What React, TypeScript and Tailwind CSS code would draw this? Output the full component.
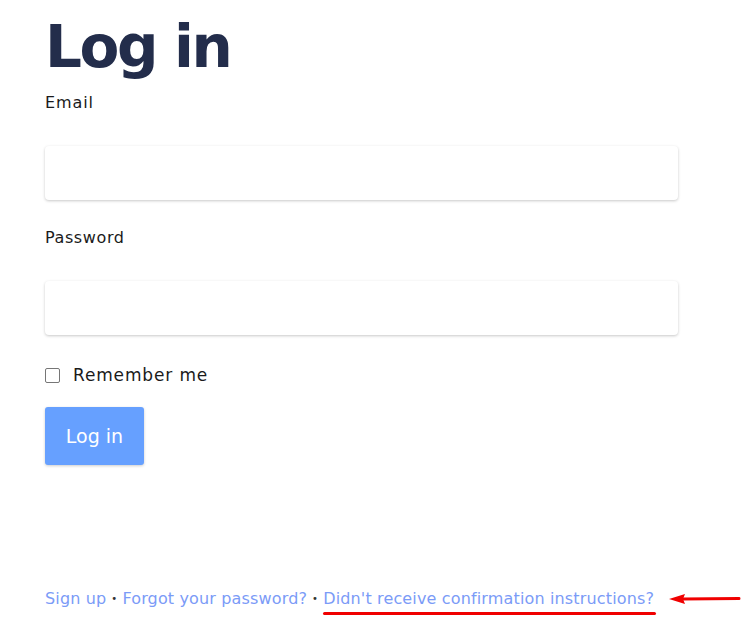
import React from "react";

export default function App() {
  const font = { fontFamily: '"DejaVu Sans", "Open Sans", sans-serif' };
  return (
    <div className="relative h-[643px] w-[755px] bg-white pl-[45px]" style={font}>
      <h1 className="pt-[9px] text-[58px] font-bold leading-[76px] tracking-[-2.4px] text-[#232d4b]">Log in</h1>
      <label className="mt-[8px] block text-[16px] leading-[20px] tracking-[0.9px] text-[#1a1a1a]">Email</label>
      <div className="mt-[33px] h-[54px] w-[633px] rounded-[4px] bg-white shadow-[0_1px_3px_rgba(0,0,0,0.22)]" />
      <label className="mt-[28px] block text-[16px] leading-[20px] tracking-[0.6px] text-[#1a1a1a]">Password</label>
      <div className="mt-[33px] h-[54px] w-[633px] rounded-[4px] bg-white shadow-[0_1px_3px_rgba(0,0,0,0.22)]" />
      <div className="mt-[30px] flex items-center">
        <span className="h-[15px] w-[15px] rounded-[2px] border border-[#767676] bg-white" />
        <span className="ml-[13px] text-[17px] leading-[20px] tracking-[0.85px] text-[#1a1a1a]">Remember me</span>
      </div>
      <button className="mt-[22px] flex h-[58px] w-[99px] items-center justify-center rounded-[3px] bg-[#66a0ff] text-[19px] text-white shadow-[0_1px_3px_rgba(0,0,0,0.2)]">
        Log in
      </button>
      <div className="mt-[124px] flex items-center text-[16px] leading-[20px] tracking-[0.15px] text-[#7b9bf7]">
        <span>Sign up</span>
        <span className="mx-[5px] text-[10px] text-[#333]">•</span>
        <span>Forgot your password?</span>
        <span className="mx-[5px] text-[10px] text-[#333]">•</span>
        <span className="relative">
          Didn't receive confirmation instructions?
          <span className="absolute -bottom-[6px] -right-[2px] left-0 h-[3px] rounded-full bg-[#f00000]" />
        </span>
        <svg className="ml-[15px]" width="72" height="14" viewBox="0 0 72 14">
          <path d="M14 7 L70 6.5" stroke="#f00000" strokeWidth="3" strokeLinecap="round" />
          <path d="M0 7 L16 2 L14 7 L16 12 Z" fill="#f00000" />
        </svg>
      </div>
    </div>
  );
}
